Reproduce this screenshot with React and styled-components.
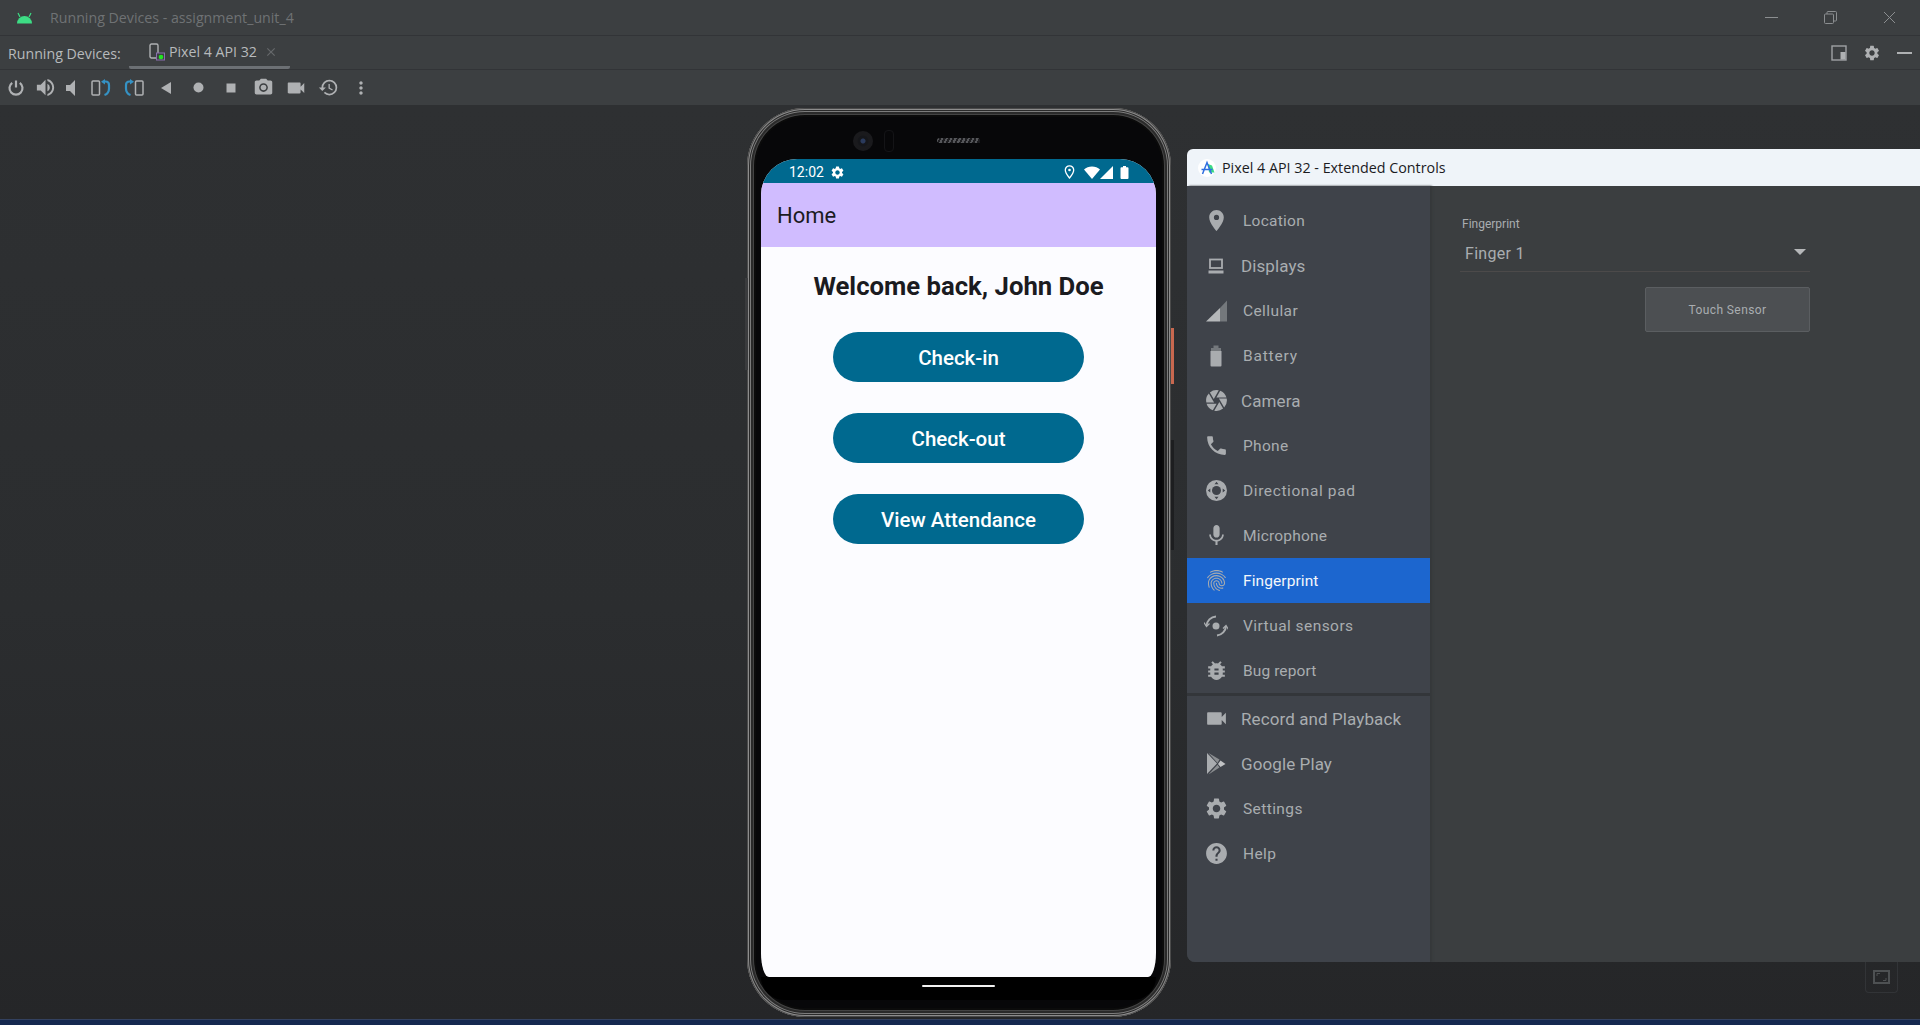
import React from 'react'
import styled, { createGlobalStyle } from 'styled-components'
import {
  MdPlace, MdCamera, MdPhone, MdMic, MdFingerprint, MdBugReport, MdVideocam, MdSettings, MdHelp,
  MdVolumeUp, MdVolumeMute, MdStop, MdFiberManualRecord, MdPhotoCamera,
  MdRestore, MdMoreVert, MdClose,
} from 'react-icons/md'

const GlobalStyle = createGlobalStyle`
  html, body {
    margin: 0;
    height: 100%;
    overflow: hidden;
    background: #2b2d2f;
  }
  #root {
    height: 100%;
  }
`

const Page = styled.div`
  width: 1920px;
  height: 1025px;
  display: flex;
  flex-direction: column;
  overflow: hidden;
  font-family: "Open Sans", "Liberation Sans", sans-serif;
`

const TitleBar = styled.div`
  height: 35px;
  flex: none;
  display: flex;
  align-items: center;
  padding-left: 16px;
  background: #3c3f41;
  border-bottom: 1px solid #323437;
  color: #6f7274;
  font-size: 14.2px;
`
const TitleText = styled.span`
  margin-left: 17px;
  flex: 1;
`
const WindowControls = styled.div`
  display: flex;
  align-items: center;
  gap: 46px;
  padding-right: 24px;
  color: #8b8e90;
`

const TabRow = styled.div`
  height: 33px;
  flex: none;
  display: flex;
  align-items: stretch;
  background: #3c3f41;
  border-bottom: 1px solid #323437;
`
const TabLabel = styled.span`
  align-self: center;
  margin: 1px 0 0 8px;
  width: 121px;
  color: #b7babc;
  font-size: 14.2px;
`
const Tab = styled.div`
  width: 161px;
  display: flex;
  align-items: center;
  padding: 1px 0 0 20px;
  box-sizing: border-box;
  gap: 3px;
  color: #b7babc;
  font-size: 14.2px;
  border-bottom: 3px solid #6c7074;
  border-radius: 0 0 2px 2px;
`
const TabClose = styled(MdClose)`
  margin-left: 4px;
  color: #66696b;
`
const TabTools = styled.div`
  margin-left: auto;
  display: flex;
  align-items: center;
  gap: 16px;
  padding-right: 8px;
  color: #afb1b3;
`

const Toolbar = styled.div`
  height: 35px;
  flex: none;
  display: flex;
  align-items: center;
  background: #3c3f41;
  color: #afb1b3;
`
const ToolButton = styled.div`
  width: ${p => p.$width}px;
  height: 100%;
  display: flex;
  align-items: center;
  justify-content: center;
`

const Desk = styled.div`
  flex: 1;
  position: relative;
  display: flex;
  align-items: flex-start;
  gap: 16px;
  padding: 3px 0 0 747px;
  background: linear-gradient(#2e3032, #2b2d2f 55%, #252628);
`

const Phone = styled.div`
  width: 424px;
  height: 909px;
  flex: none;
  box-sizing: border-box;
  position: relative;
  padding: 51px 15px 0 14px;
  border-radius: 58px;
  background: #070709;
  box-shadow:
    inset 0 0 0 1px #4a4a4a,
    inset 0 0 0 2px #8c8c8c,
    inset 0 0 0 3px #2a2a2a,
    inset 0 0 0 4px #7c7c7c,
    inset 0 0 0 6px #2a2a2a,
    inset 0 0 0 7px #444,
    inset 0 0 0 9px #0b0b0b;
`
const Camera = styled.div`
  position: absolute;
  top: 23px;
  left: 106px;
  width: 20px;
  height: 20px;
  border-radius: 50%;
  background: radial-gradient(circle, #2a3a5c 0 2px, #15161a 3px 5px, #1a1a1d 6px 10px);
`
const Sensor = styled.div`
  position: absolute;
  top: 22px;
  left: 137px;
  width: 8px;
  height: 20px;
  border-radius: 4px;
  border: 1px solid #141417;
`
const Speaker = styled.div`
  position: absolute;
  top: 30px;
  left: 190px;
  width: 43px;
  height: 5px;
  border-radius: 3px;
  background: repeating-linear-gradient(115deg, #55565a 0 2px, #1d1d20 2px 4px);
`
const SideKey = styled.div`
  position: absolute;
  top: ${p => p.$top}px;
  height: ${p => p.$height}px;
  ${p => (p.$left ? 'left: -2px;' : 'right: -3px;')}
  width: 3px;
  background: ${p => p.$color};
`

const Screen = styled.div`
  height: 818px;
  display: flex;
  flex-direction: column;
  background: #fcfcff;
  border-radius: 36px 36px 8px 8px / 36px 36px 24px 24px;
  overflow: hidden;
  font-family: Roboto, "Liberation Sans", sans-serif;
`
const StatusBar = styled.div`
  height: 24px;
  flex: none;
  box-sizing: border-box;
  display: flex;
  align-items: center;
  padding: 2px 27px 0 28px;
  background: #00698f;
  color: #fff;
  font-size: 14px;
`
const StatusTime = styled.span`
  margin-right: 6px;
`
const StatusIcons = styled.div`
  margin-left: auto;
  display: flex;
  align-items: center;
`
const StatusGap = styled.span`
  width: ${p => p.$width}px;
`
const AppBar = styled.div`
  height: 64px;
  flex: none;
  display: flex;
  align-items: center;
  padding: 1px 0 0 16px;
  box-sizing: border-box;
  background: #d0bcff;
  color: #1b1b1f;
  font-size: 22px;
`
const HomeBody = styled.div`
  flex: 1;
  display: flex;
  flex-direction: column;
  align-items: center;
`
const Welcome = styled.h1`
  margin: 23px 0 30px;
  line-height: 32px;
  font-size: 25.7px;
  font-weight: 700;
  color: #1b1b1f;
`
const ActionButton = styled.div`
  width: 251px;
  height: 50px;
  box-sizing: border-box;
  margin-bottom: 31px;
  padding-top: 2px;
  display: flex;
  align-items: center;
  justify-content: center;
  border-radius: 25px;
  background: #00698f;
  color: #fff;
  font-size: 20.5px;
  font-weight: 500;
`
const NavArea = styled.div`
  height: 15px;
  display: flex;
  justify-content: center;
  padding-top: 8px;
  background: #000;
  border-radius: 0 0 24px 24px;
`
const HomeBar = styled.div`
  width: 73px;
  height: 2px;
  background: #f2f2f2;
  border-radius: 1px;
`

const ControlWindow = styled.div`
  flex: 1;
  height: 813px;
  margin-top: 41px;
  display: flex;
  flex-direction: column;
  border-radius: 6px 0 0 8px;
  overflow: hidden;
  background: #3b3e40;
`
const ControlTitle = styled.div`
  height: 37px;
  flex: none;
  display: flex;
  align-items: center;
  gap: 6px;
  padding-left: 11px;
  background: #eff4f9;
  color: #1b1b1f;
  font-size: 14.3px;
`
const ControlBody = styled.div`
  flex: 1;
  display: flex;
  min-height: 0;
`
const Sidebar = styled.nav`
  width: 243px;
  flex: none;
  box-sizing: border-box;
  padding-top: 12px;
  background: #3f434a;
  box-shadow: 2px 0 2px #35383a;
  font-family: Roboto, "Liberation Sans", sans-serif;
`
const NavGroup = styled.div`
  & + & {
    border-top: 3px solid #33363a;
  }
`
const NavRow = styled.div`
  height: 45px;
  display: flex;
  align-items: center;
  padding-left: 15px;
  color: ${p => (p.$active ? '#f3f6fa' : '#a9adb0')};
  background: ${p => (p.$active ? '#1c66cf' : 'transparent')};
`
const NavIcon = styled.span`
  width: 28px;
  height: 28px;
  flex: none;
  display: flex;
  align-items: center;
  justify-content: center;
  color: #a9acaf;
`
const NavText = styled.span`
  margin-left: ${p => (p.$large ? 11 : 13)}px;
  font-size: ${p => (p.$large ? 17 : 15.5)}px;
  letter-spacing: ${p => p.$track || 0.1}px;
`

const Panel = styled.div`
  flex: 1;
  padding: 30px 0 0 30px;
  color: #a9adb0;
  font-family: Roboto, "Liberation Sans", sans-serif;
`
const FieldLabel = styled.div`
  margin-left: 2px;
  font-size: 12px;
  line-height: 16px;
`
const Select = styled.div`
  width: 350px;
  height: 40px;
  box-sizing: border-box;
  display: flex;
  align-items: center;
  justify-content: space-between;
  padding: 4px 4px 0 5px;
  border-bottom: 1px solid #4c4a4a;
  font-size: 16px;
  letter-spacing: 0.3px;
`
const Caret = styled.span`
  width: 0;
  height: 0;
  border-left: 6px solid transparent;
  border-right: 6px solid transparent;
  border-top: 6px solid #b5b7b9;
  margin-bottom: 3px;
`
const TouchButton = styled.div`
  width: 165px;
  height: 45px;
  margin: 15px 0 0 185px;
  box-sizing: border-box;
  display: flex;
  align-items: center;
  justify-content: center;
  background: #4c4f52;
  border: 1px solid #5b5e61;
  border-radius: 2px;
  font-size: 12px;
  letter-spacing: 0.4px;
`

const ResizeTab = styled.div`
  position: absolute;
  right: 22px;
  top: 857px;
  width: 33px;
  height: 31px;
  box-sizing: border-box;
  display: flex;
  align-items: center;
  justify-content: center;
  border: 1px solid #323437;
  border-top: none;
  border-radius: 0 0 4px 4px;
`
const Taskbar = styled.div`
  height: 5px;
  flex: none;
  background: #14284f;
  border-top: 1px solid #33415f;
`

const AndroidHead = () => (
  <svg width="17" height="12" viewBox="0 0 17 12" fill="#3ddc84">
    <path d="M1 11.5a7.5 7.5 0 0 1 15 0z" />
    <path d="M4 5L2 1M13 5l2-4" stroke="#3ddc84" strokeWidth="1.2" />
  </svg>
)
const TabDeviceIcon = () => (
  <svg width="17" height="18" viewBox="0 0 17 18" fill="none">
    <rect x="1" y="1" width="8" height="14" rx="1.5" stroke="#afb1b3" strokeWidth="1.4" />
    <rect x="7.5" y="10" width="8" height="7" fill="#3c3f41" stroke="#8a6fb0" />
    <circle cx="12" cy="14" r="2.3" fill="#22e622" />
  </svg>
)
const PowerIcon = () => (
  <svg width="16" height="16" viewBox="0 0 16 16" fill="none" stroke="currentColor" strokeWidth="2.2">
    <path d="M8 0.5v7" />
    <path d="M4.200 2.800a6.500 6.500 0 1 0 7.600 0" />
  </svg>
)
const RotateIcon = ({ flip }) => (
  <svg width="20" height="18" viewBox="0 0 20 18" fill="none" style={flip ? { transform: 'scaleX(-1)' } : undefined}>
    <rect x="1" y="2" width="7.5" height="14" rx="1" stroke="#afb1b3" strokeWidth="1.5" />
    <path d="M13 2.500h1.500c2 0 3.500 1.500 3.500 3.500v3.500c0 3-1.500 5.500-4.500 6.500" stroke="#3592c4" strokeWidth="2.2" />
    <path d="M14 0v5.500l-4-2.700z" fill="#3592c4" />
  </svg>
)
const BackIcon = () => (
  <svg width="12" height="14" viewBox="0 0 12 14" fill="currentColor"><path d="M11 1v12L1 7z" /></svg>
)
const LayoutIcon = () => (
  <svg width="16" height="16" viewBox="0 0 16 16" fill="none">
    <rect x="1" y="1" width="14" height="14" stroke="#9fa2a4" strokeWidth="1.4" />
    <rect x="9.5" y="7" width="5" height="7.5" fill="#afb1b3" />
  </svg>
)
const DashIcon = ({ color, width = 15, thick = 2 }) => (
  <svg width={width} height={thick} viewBox={`0 0 ${width} ${thick}`}><rect width={width} height={thick} fill={color} /></svg>
)
const RestoreWinIcon = () => (
  <svg width="13" height="13" viewBox="0 0 13 13" fill="none" stroke="#8b8e90">
    <rect x="0.5" y="3" width="9" height="9.5" rx="1" />
    <path d="M3 3V1.5a1 1 0 0 1 1-1h7.5a1 1 0 0 1 1 1V9a1 1 0 0 1-1 1H9.5" />
  </svg>
)
const CloseWinIcon = () => (
  <svg width="13" height="13" viewBox="0 0 13 13" stroke="#8b8e90"><path d="M1 1l11 11M12 1L1 12" /></svg>
)
const StudioIcon = () => (
  <svg width="18" height="18" viewBox="0 0 18 18" fill="none">
    <circle cx="9" cy="9" r="9" fill="#fff" />
    <path d="M10 5l4 1.500 2.500 7H11z" fill="#3ddc84" />
    <path d="M4.500 15L9 3.500 13.500 15M3.500 10.500h11" stroke="#2f6fe0" strokeWidth="1.500" />
  </svg>
)
const PinIcon = () => (
  <svg width="11" height="14" viewBox="0 0 10 14" fill="none">
    <path d="M5 .8a4.200 4.200 0 0 0-4.200 4.200C.8 8 5 13 5 13s4.200-5 4.200-8A4.200 4.200 0 0 0 5 .8z" stroke="#fff" strokeWidth="1.300" />
    <circle cx="5" cy="5" r="1.300" fill="#fff" />
  </svg>
)
const WifiIcon = () => (
  <svg width="16" height="13" viewBox="0 0 16 13" fill="#fff"><path d="M0 3.500C2 1.500 5 .5 8 .5s6 1 8 3L8 13z" /></svg>
)
const SignalIcon = () => (
  <svg width="13" height="13" viewBox="0 0 13 13" fill="#fff"><path d="M0 13L13 0v13z" /></svg>
)
const BatteryIcon = () => (
  <svg width="9" height="13" viewBox="0 0 8 13" fill="#fff"><path d="M2.500 0h3v1.200H7a1 1 0 0 1 1 1V12a1 1 0 0 1-1 1H1a1 1 0 0 1-1-1V2.200a1 1 0 0 1 1-1h1.500z" /></svg>
)
const DisplayIcon = () => (
  <svg width="16" height="16" viewBox="0 0 16 16" fill="none">
    <rect x="2" y="1.500" width="12" height="8.500" stroke="currentColor" strokeWidth="1.800" />
    <rect x="0.500" y="12.500" width="15" height="3" fill="currentColor" />
  </svg>
)
const CellularIcon = () => (
  <svg width="22" height="22" viewBox="0 0 22 22">
    <path d="M1 21.500L15 8v13.500z" fill="#b5b8ba" />
    <path d="M15 8l7-7.500v21h-7z" fill="#74787c" />
  </svg>
)
const BatterySideIcon = () => (
  <svg width="12" height="22" viewBox="0 0 12 22">
    <path d="M3.500 0.500h5v2.500H3.500z" fill="#74787c" />
    <path d="M1 3h10v3H1z" fill="#74787c" />
    <path d="M.5 6h11v14.500a1 1 0 0 1-1 1h-9a1 1 0 0 1-1-1z" fill="#a9acaf" />
  </svg>
)
const DpadIcon = () => (
  <svg width="21" height="21" viewBox="0 0 21 21">
    <circle cx="10.500" cy="10.500" r="10.500" fill="#a9acaf" />
    <circle cx="10.500" cy="10.500" r="4.500" fill="#3f434a" />
    <path d="M10.500 1.800l2 2.500h-4zM10.500 19.200l2-2.500h-4zM1.800 10.500l2.500-2v4zM19.200 10.500l-2.500-2v4z" fill="#3f434a" />
  </svg>
)
const SensorsIcon = () => (
  <svg width="24" height="22" viewBox="0 0 24 22" fill="none" stroke="#a9acaf" strokeWidth="2">
    <path d="M2.500 11A10 10 0 0 1 12 1.500" />
    <path d="M22 11a10 10 0 0 1-9 9.500" />
    <path d="M0 7.500l2.500 4 3-3M24.500 14.500l-2.500-4-3 3" strokeWidth="1.300" />
    <circle cx="12" cy="11" r="3.500" fill="#a9acaf" stroke="none" />
  </svg>
)
const PlayStoreIcon = () => (
  <svg width="20" height="22" viewBox="0 0 20 22">
    <path d="M1 0l10 10.500L1 21z" fill="#a9acaf" />
    <path d="M2.500 0l11 6.500L11.500 10z" fill="#8b8e91" />
    <path d="M2.500 21.500l11-7-2-2.800z" fill="#8b8e91" />
    <path d="M14.500 7.500L19.500 11l-5 3-2.500-3z" fill="#c0c2c4" />
  </svg>
)
const ResizeGlyph = () => (
  <svg width="17" height="14" viewBox="0 0 17 14" fill="none" stroke="#4e5153">
    <rect x="1" y="1" width="15" height="12" strokeWidth="2" />
    <path d="M4 6V3.500h3M13 8v2.500h-3" />
  </svg>
)

const sensorRows = [
  { label: 'Location', icon: <MdPlace size={25} />, track: 0.25 },
  { label: 'Displays', icon: <DisplayIcon />, large: true },
  { label: 'Cellular', icon: <CellularIcon />, track: 0.4 },
  { label: 'Battery', icon: <BatterySideIcon />, track: 0.8 },
  { label: 'Camera', icon: <MdCamera size={25} />, large: true },
  { label: 'Phone', icon: <MdPhone size={25} />, track: 0.3 },
  { label: 'Directional pad', icon: <DpadIcon />, track: 0.6 },
  { label: 'Microphone', icon: <MdMic size={25} />, track: 0.2 },
  { label: 'Fingerprint', icon: <MdFingerprint size={25} />, active: true },
  { label: 'Virtual sensors', icon: <SensorsIcon />, track: 0.45 },
  { label: 'Bug report', icon: <MdBugReport size={25} /> },
]
const extraRows = [
  { label: 'Record and Playback', icon: <MdVideocam size={25} />, large: true },
  { label: 'Google Play', icon: <PlayStoreIcon />, large: true },
  { label: 'Settings', icon: <MdSettings size={25} />, track: 0.4 },
  { label: 'Help', icon: <MdHelp size={25} />, track: 0.4 },
]

const toolButtons = [
  { width: 32, icon: <PowerIcon /> },
  { width: 26, icon: <MdVolumeUp size={23} /> },
  { width: 26, icon: <MdVolumeMute size={24} /> },
  { width: 34, icon: <RotateIcon /> },
  { width: 32, icon: <RotateIcon flip /> },
  { width: 32.5, icon: <BackIcon /> },
  { width: 32.5, icon: <MdFiberManualRecord size={15} /> },
  { width: 32.5, icon: <MdStop size={18} /> },
  { width: 32.5, icon: <MdPhotoCamera size={21} /> },
  { width: 32.5, icon: <MdVideocam size={22} /> },
  { width: 32.5, icon: <MdRestore size={21} /> },
  { width: 32.5, icon: <MdMoreVert size={20} /> },
]

function NavList({ rows }) {
  return (
    <NavGroup>
      {rows.map(row => (
        <NavRow key={row.label} $active={row.active}>
          <NavIcon>{row.icon}</NavIcon>
          <NavText $large={row.large} $track={row.track}>{row.label}</NavText>
        </NavRow>
      ))}
    </NavGroup>
  )
}

export default function App() {
  return (
    <Page>
      <GlobalStyle />
      <TitleBar>
        <AndroidHead />
        <TitleText>Running Devices - assignment_unit_4</TitleText>
        <WindowControls>
          <DashIcon color="#8b8e90" width={13} thick={1} />
          <RestoreWinIcon />
          <CloseWinIcon />
        </WindowControls>
      </TitleBar>
      <TabRow>
        <TabLabel>Running Devices:</TabLabel>
        <Tab>
          <TabDeviceIcon />
          Pixel 4 API 32
          <TabClose size={14} />
        </Tab>
        <TabTools>
          <LayoutIcon />
          <MdSettings size={18} />
          <DashIcon color="#afb1b3" />
        </TabTools>
      </TabRow>
      <Toolbar>
        {toolButtons.map((tool, i) => (
          <ToolButton key={i} $width={tool.width}>{tool.icon}</ToolButton>
        ))}
      </Toolbar>
      <Desk>
        <Phone>
          <Camera />
          <Sensor />
          <Speaker />
          <SideKey $left $top={170} $height={92} $color="#3a3b3d" />
          <SideKey $top={220} $height={56} $color="#c8684f" />
          <SideKey $top={332} $height={110} $color="#1d1e20" />
          <Screen>
            <StatusBar>
              <StatusTime>12:02</StatusTime>
              <MdSettings size={15} />
              <StatusIcons>
                <PinIcon />
                <StatusGap $width={9} />
                <WifiIcon />
                <SignalIcon />
                <StatusGap $width={7} />
                <BatteryIcon />
              </StatusIcons>
            </StatusBar>
            <AppBar>Home</AppBar>
            <HomeBody>
              <Welcome>Welcome back, John Doe</Welcome>
              <ActionButton>Check-in</ActionButton>
              <ActionButton>Check-out</ActionButton>
              <ActionButton>View Attendance</ActionButton>
            </HomeBody>
          </Screen>
          <NavArea>
            <HomeBar />
          </NavArea>
        </Phone>
        <ControlWindow>
          <ControlTitle>
            <StudioIcon />
            Pixel 4 API 32 - Extended Controls
          </ControlTitle>
          <ControlBody>
            <Sidebar>
              <NavList rows={sensorRows} />
              <NavList rows={extraRows} />
            </Sidebar>
            <Panel>
              <FieldLabel>Fingerprint</FieldLabel>
              <Select>
                Finger 1
                <Caret />
              </Select>
              <TouchButton>Touch Sensor</TouchButton>
            </Panel>
          </ControlBody>
        </ControlWindow>
        <ResizeTab>
          <ResizeGlyph />
        </ResizeTab>
      </Desk>
      <Taskbar />
    </Page>
  )
}
